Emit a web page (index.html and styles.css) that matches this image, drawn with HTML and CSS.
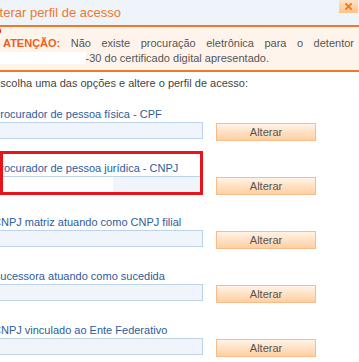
FILE: index.html
```html
<!DOCTYPE html>
<html lang="pt-BR">
<head>
  <meta charset="UTF-8" />
  <meta name="viewport" content="width=device-width, initial-scale=1.0"/>
  <title>Alterar perfil de acesso</title>
  <link rel="stylesheet" href="styles.css">
</head>
<body>

  <div class="janela">
    <div class="titulo">
      <span>Alterar perfil de acesso</span>
      <a class="fechar" href="#" title="Fechar">
        <svg width="7" height="7" viewBox="0 0 7 7">
          <path d="M1 1 L6 6 M6 1 L1 6" stroke="#f07a22" stroke-width="1.8" stroke-linecap="square" />
        </svg>
      </a>
    </div>

    <div class="aviso">
      <span class="marca"></span>
      <p><strong>ATENÇÃO:</strong> Não existe procuração eletrônica para o detentor <span class="oculto">00.000.000/0000</span>-30 do certificado digital apresentado.</p>
    </div>

    <div class="conteudo">
      <p class="instrucao">Escolha uma das opções e altere o perfil de acesso:</p>

      <div class="opcao">
        <label for="cpf">Procurador de pessoa física - CPF</label>
        <div class="linha">
          <input type="text" id="cpf" />
          <button>Alterar</button>
        </div>
      </div>

      <div class="opcao destaque">
        <label for="cnpj">Procurador de pessoa jurídica - CNPJ</label>
        <div class="linha">
          <input type="text" id="cnpj" class="preenchido" />
          <button>Alterar</button>
        </div>
      </div>

      <div class="opcao">
        <label for="filial">CNPJ matriz atuando como CNPJ filial</label>
        <div class="linha">
          <input type="text" id="filial" />
          <button>Alterar</button>
        </div>
      </div>

      <div class="opcao">
        <label for="sucedida">Sucessora atuando como sucedida</label>
        <div class="linha">
          <input type="text" id="sucedida" />
          <button>Alterar</button>
        </div>
      </div>

      <div class="opcao">
        <label for="ente">CNPJ vinculado ao Ente Federativo</label>
        <div class="linha">
          <input type="text" id="ente" />
          <button>Alterar</button>
        </div>
      </div>
    </div>
  </div>

</body>
</html>
```

FILE: styles.css
```css
body {
  margin: 0;
  font-family: "Liberation Sans", Arial, sans-serif;
  font-size: 11px;
  color: #444;
  background: #fff;
  overflow: hidden;
}

.janela {
  margin-left: -12px;
}

.titulo {
  display: flex;
  justify-content: space-between;
  height: 25px;
  background-color: #eef4fa;
  border-bottom: 2px solid #f0782a;
}

.titulo span {
  font-size: 13px;
  line-height: 25px;
  color: #f07828;
}

.fechar {
  display: flex;
  align-items: center;
  justify-content: center;
  width: 19px;
  height: 13px;
  margin-right: 1px;
  background: linear-gradient(#ffe4c8, #ffc283);
}

.aviso {
  position: relative;
  background-color: #fff4ec;
  border-bottom: 2px solid #f0782a;
  padding: 9px 5px 4px 15px;
}

.marca {
  position: absolute;
  left: 7px;
  top: 1px;
  width: 6px;
  height: 6px;
  border-radius: 50%;
  background-color: #e8141c;
}

.aviso p {
  margin: 0;
  line-height: 15px;
  text-align: justify;
  color: #555;
}

.aviso strong {
  color: #ee5f1b;
}

.oculto {
  background-color: #fff;
  color: #fff;
  padding-left: 3px;
  margin-left: -3px;
}

.conteudo {
  padding: 4px 0 0 5px;
}

.instrucao {
  margin: 0;
  line-height: 15px;
}

.opcao {
  margin-top: 16px;
}

.opcao + .opcao {
  margin-top: 20px;
}

.opcao label {
  display: block;
  line-height: 15px;
  color: #2d5c9c;
}

.linha {
  display: flex;
  align-items: flex-start;
}

input {
  box-sizing: border-box;
  width: 210px;
  height: 17px;
  margin: 0;
  padding: 0 3px;
  border: 1px solid #bcd3e8;
  background-color: #eff5fa;
}

input.preenchido {
  background: linear-gradient(to right, #fff 119px, #eff5fa 119px);
}

button {
  box-sizing: border-box;
  width: 100px;
  height: 18px;
  margin: 1px 0 0 13px;
  padding: 0;
  border: 1px solid #f8bb8a;
  background: linear-gradient(#fff3e6, #ffcfa2);
  font-family: "Liberation Sans", Arial, sans-serif;
  font-size: 11px;
  color: #555;
  cursor: pointer;
}

/* marcação vermelha sobre a opção de pessoa jurídica */
.destaque {
  position: relative;
}

.destaque::after {
  content: "";
  position: absolute;
  left: 7px;
  top: -10px;
  width: 203px;
  height: 44px;
  box-sizing: border-box;
  border: 3px solid #e8141c;
}
```
